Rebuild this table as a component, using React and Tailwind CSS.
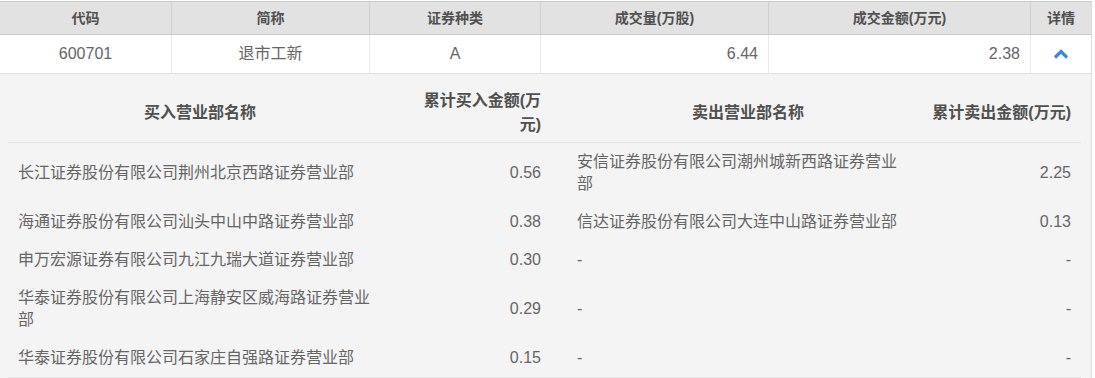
import React from "react";

const font = { fontFamily: '"Liberation Sans", "Noto Sans CJK SC", sans-serif' };

const buys = [
  ["长江证券股份有限公司荆州北京西路证券营业部", "0.56"],
  ["海通证券股份有限公司汕头中山中路证券营业部", "0.38"],
  ["申万宏源证券有限公司九江九瑞大道证券营业部", "0.30"],
  ["华泰证券股份有限公司上海静安区威海路证券营业部", "0.29"],
  ["华泰证券股份有限公司石家庄自强路证券营业部", "0.15"],
];
const sells = [
  ["安信证券股份有限公司潮州城新西路证券营业部", "2.25"],
  ["信达证券股份有限公司大连中山路证券营业部", "0.13"],
  ["-", "-"],
  ["-", "-"],
  ["-", "-"],
];

function Chevron() {
  return (
    <svg width="16" height="10" viewBox="0 0 16 10">
      <polyline points="2,8.5 8,2.5 14,8.5" fill="none" stroke="#3b88d6" strokeWidth="3.2" strokeLinejoin="miter" />
    </svg>
  );
}

export default function App() {
  const heads = [
    ["代码", "w-[172px]"],
    ["简称", "w-[198px]"],
    ["证券种类", "w-[171px]"],
    ["成交量(万股)", "w-[228px]"],
    ["成交金额(万元)", "w-[262px]"],
    ["详情", "w-[60px]"],
  ];
  return (
    <div className="w-[1095px] h-[378px] bg-white overflow-hidden pt-[1px]" style={font}>
      <div className="w-[1092px] border-r border-[#dcdcdc]">
        {/* header */}
        <div className="flex h-[34px] bg-[#e2e2e2] border-t border-b border-[#c9c9c9]">
          {heads.map(([t, w], i) => (
            <div
              key={i}
              className={`${w} flex items-center justify-center text-[14px] font-bold text-[#505050] ${i < 5 ? "border-r border-[#cfcfcf]" : ""}`}
            >
              {t}
            </div>
          ))}
        </div>
        {/* data row */}
        <div className="flex h-[39px] bg-white border-b border-[#e0e0e0] text-[16px] text-[#666666]">
          <div className="w-[172px] flex items-center justify-center border-r border-[#e8e8e8]">600701</div>
          <div className="w-[198px] flex items-center justify-center border-r border-[#e8e8e8]">退市工新</div>
          <div className="w-[171px] flex items-center justify-center border-r border-[#e8e8e8]">A</div>
          <div className="w-[228px] flex items-center justify-end pr-[10px] border-r border-[#e8e8e8]">6.44</div>
          <div className="w-[262px] flex items-center justify-end pr-[10px] border-r border-[#e8e8e8]">2.38</div>
          <div className="w-[60px] flex items-center justify-center">
            <Chevron />
          </div>
        </div>
        {/* detail */}
        <div className="bg-[#f4f4f4] h-[305px]">
          <div className="ml-[8px] w-[1073px]">
            <div className="grid grid-cols-[384px_159px_370px_160px] border-b border-[#e3e3e3] text-[16px] font-bold text-[#505050] leading-[24px]">
              <div className="h-[68px] flex items-center justify-center px-[10px] pt-[10px]">买入营业部名称</div>
              <div className="h-[68px] flex items-center justify-end pl-[24px] pr-[10px] pt-[10px] text-right">累计买入金额(万元)</div>
              <div className="h-[68px] flex items-center justify-center pl-[26px] pr-[2px] pt-[10px]">卖出营业部名称</div>
              <div className="h-[68px] flex items-center justify-end px-[10px] pt-[10px] whitespace-nowrap">累计卖出金额(万元)</div>
            </div>
            <div className="border-b border-[#e3e3e3] text-[16px] text-[#666666] leading-[22px]">
              {buys.map((b, i) => (
                <div key={i} className="grid grid-cols-[384px_159px_370px_160px]">
                  <div className="flex items-center px-[10px] py-2">{b[0]}</div>
                  <div className="flex items-center justify-end pr-[10px] py-2">{b[1]}</div>
                  <div className="flex items-center pl-[26px] pr-[16px] py-2">{sells[i][0]}</div>
                  <div className="flex items-center justify-end px-[10px] py-2">{sells[i][1]}</div>
                </div>
              ))}
            </div>
          </div>
        </div>
      </div>
    </div>
  );
}
